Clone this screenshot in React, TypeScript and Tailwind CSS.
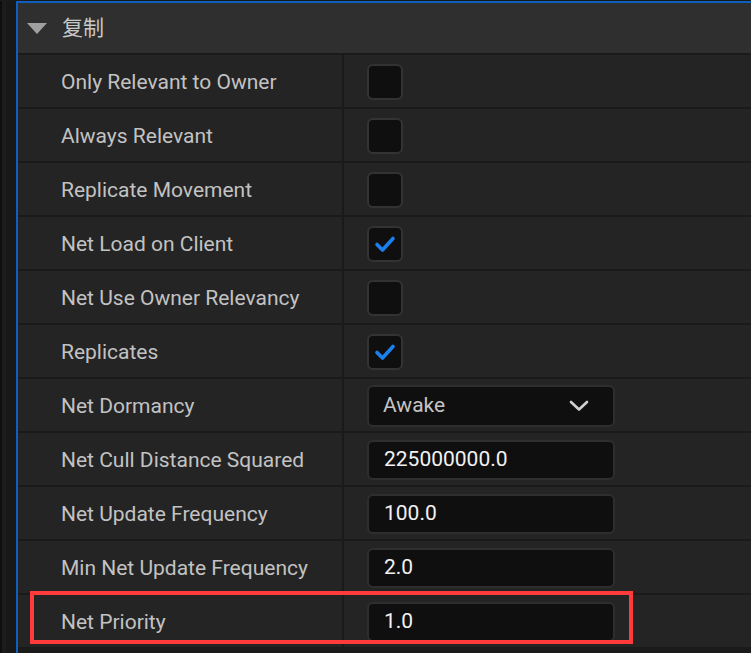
const rows: { label: string; kind: "check" | "input" | "select"; checked?: boolean; value?: string }[] = [
  { label: "Only Relevant to Owner", kind: "check" },
  { label: "Always Relevant", kind: "check" },
  { label: "Replicate Movement", kind: "check" },
  { label: "Net Load on Client", kind: "check", checked: true },
  { label: "Net Use Owner Relevancy", kind: "check" },
  { label: "Replicates", kind: "check", checked: true },
  { label: "Net Dormancy", kind: "select", value: "Awake" },
  { label: "Net Cull Distance Squared", kind: "input", value: "225000000.0" },
  { label: "Net Update Frequency", kind: "input", value: "100.0" },
  { label: "Min Net Update Frequency", kind: "input", value: "2.0" },
  { label: "Net Priority", kind: "input", value: "1.0" },
]

function CheckBox({ checked }: { checked?: boolean }) {
  return (
    <div className="w-[36px] h-[36px] rounded-[6px] border-2 border-[#333333] bg-[#0f0f0f] flex items-center justify-center">
      {checked && (
        <svg width="26" height="26" viewBox="0 0 26 26">
          <path d="M5 13.5 L10.5 19 L21 7.5" fill="none" stroke="#1b80ee" strokeWidth="3.6" strokeLinecap="round" strokeLinejoin="round" />
        </svg>
      )}
    </div>
  )
}

function Value({ row }: { row: (typeof rows)[number] }) {
  if (row.kind === "check") return <CheckBox checked={row.checked} />
  if (row.kind === "select") {
    return (
      <div className="w-[248px] h-[42px] rounded-[6px] border-2 border-[#2e2e2e] bg-[#0f0f0f] flex items-center justify-between pl-[14px] pr-[24px] text-[#c4c4c4]">
        <span>{row.value}</span>
        <svg width="20" height="12" viewBox="0 0 20 12">
          <path d="M2 2 L10 9.5 L18 2" fill="none" stroke="#d0d0d0" strokeWidth="2.6" strokeLinecap="round" strokeLinejoin="round" />
        </svg>
      </div>
    )
  }
  return (
    <div className="w-[248px] h-[40px] rounded-[6px] border-2 border-[#2e2e2e] bg-[#0f0f0f] flex items-center pl-[15px] text-[#f2f2f2]">
      {row.value}
    </div>
  )
}

export default function App() {
  return (
    <div className="relative w-[751px] h-[653px] overflow-hidden bg-[#1a1a1a] flex pt-px text-[21px] leading-none" style={{ fontFamily: "Roboto, 'Noto Sans CJK SC', sans-serif" }}>
      <div className="w-[16px] flex shrink-0">
        <div className="w-[2px] bg-[#0e0e0e]" />
        <div className="w-[4px] bg-[#1c1c1c]" />
        <div className="flex-1 bg-[#181818]" />
      </div>
      <div className="flex-1 flex flex-col border-l-2 border-t-2 border-[#0f5fbf] bg-[#1a1a1a]">
        <div className="h-[50px] shrink-0 bg-[#2f2f2f] flex items-center pl-[9px] gap-[15px] text-[#c8c8c8]">
          <svg width="20" height="13" viewBox="0 0 20 13">
            <path d="M0 1 L20 1 L10 12 Z" fill="#a0a0a0" />
          </svg>
          <span>复制</span>
        </div>
        {rows.map((row) => (
          <div key={row.label} className="h-[52px] shrink-0 mt-[2px] flex bg-[#242424]">
            <div className="w-[324px] shrink-0 flex items-center pl-[43px] pt-[2px] text-[#c2c2c2]">{row.label}</div>
            <div className="w-[2px] bg-[#1a1a1a]" />
            <div className="flex-1 flex items-center pl-[23px] pt-px">
              <Value row={row} />
            </div>
          </div>
        ))}
      </div>
      <div className="absolute left-[30px] top-[591px] w-[603px] h-[53px] border-[4px] border-[#ff3b3b]" />
    </div>
  )
}
